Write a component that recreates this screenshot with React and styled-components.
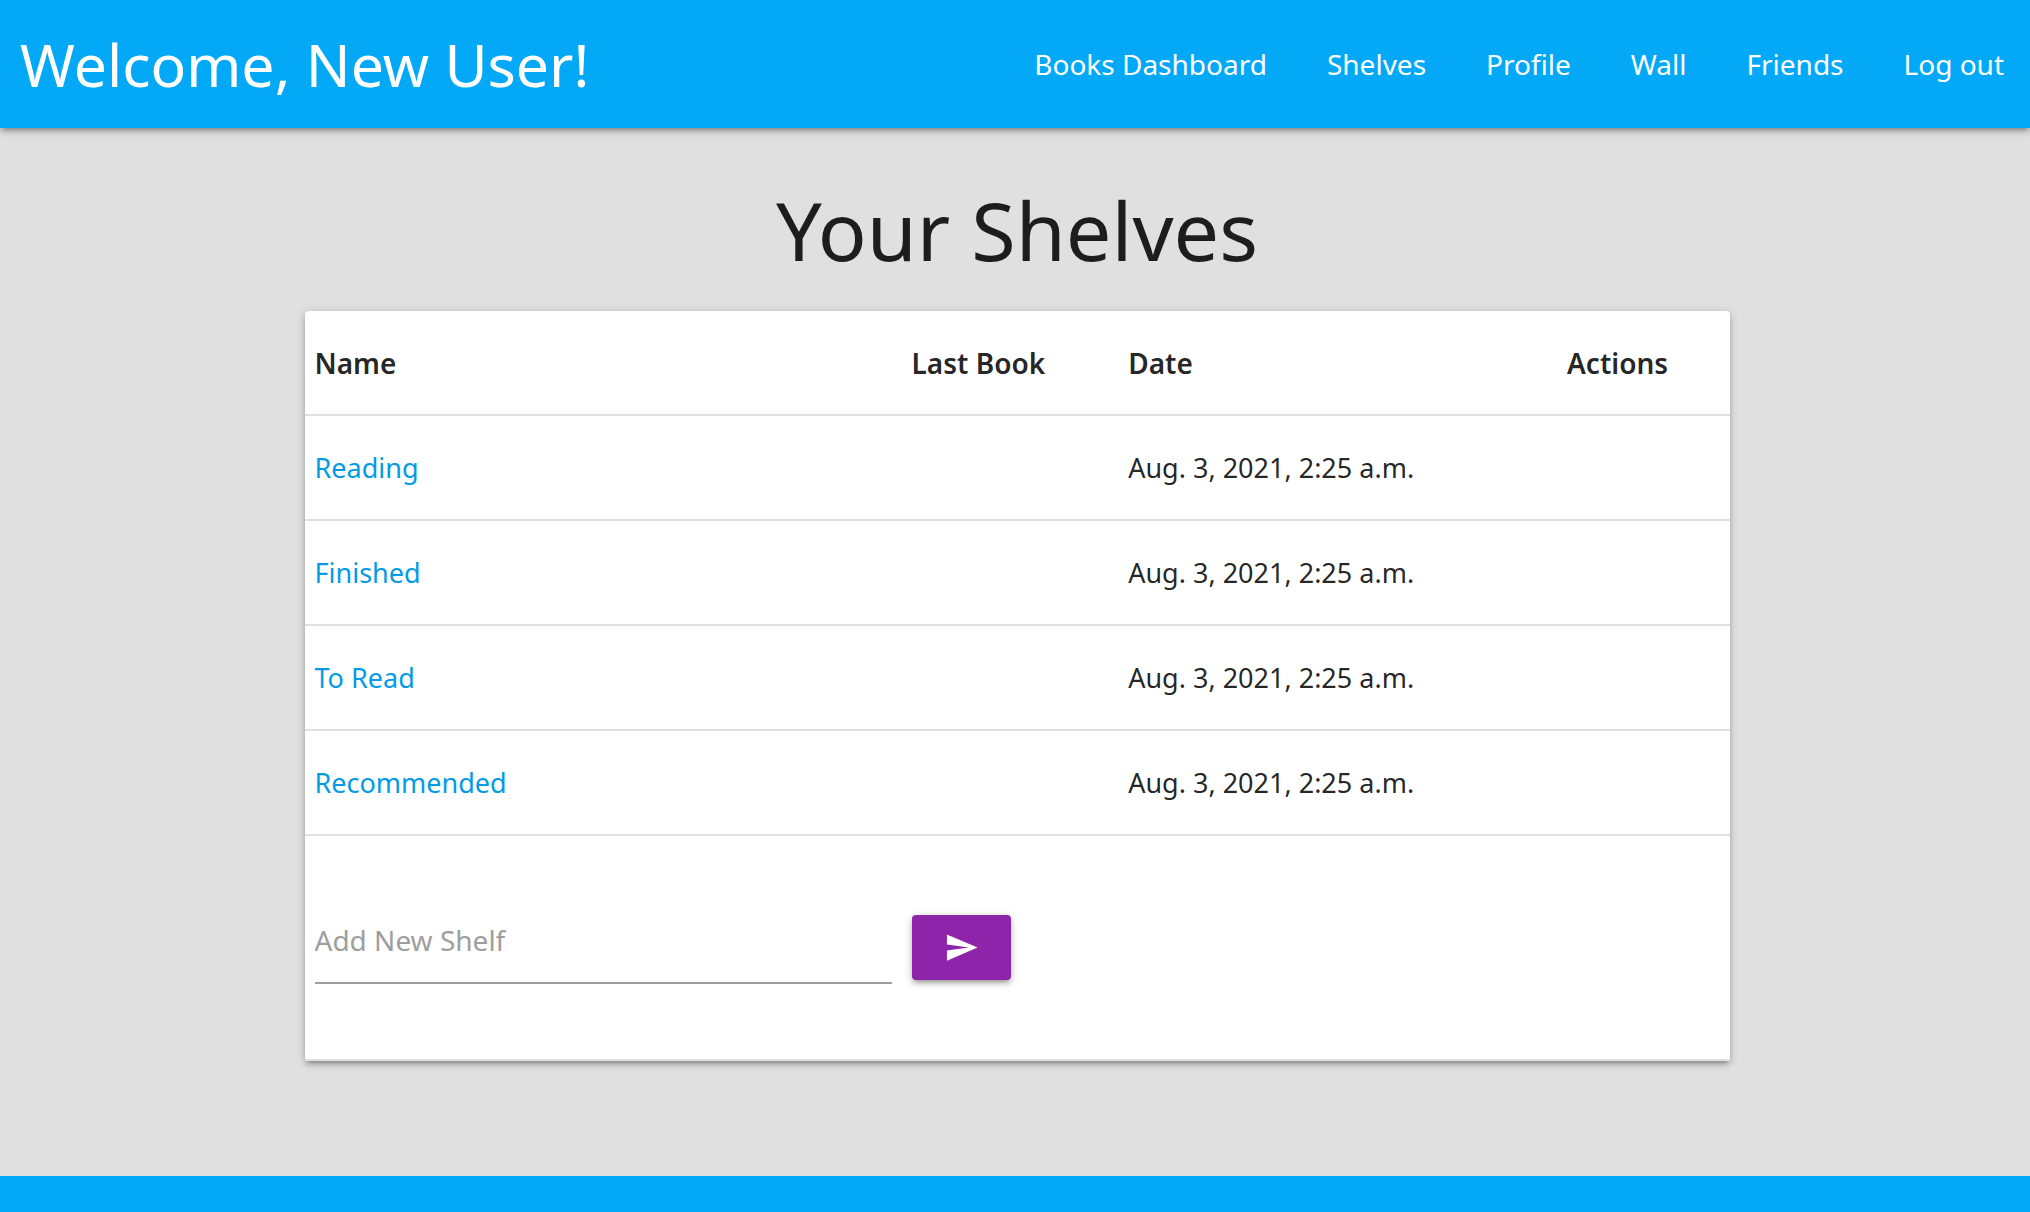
import React from "react";
import styled, { createGlobalStyle } from "styled-components";

const GlobalStyle = createGlobalStyle`
  *, *::before, *::after { box-sizing: border-box; }
  body {
    margin: 0;
    background: #e0e0e0;
    color: rgba(0, 0, 0, 0.87);
    font-family: "Noto Sans", "Open Sans", sans-serif;
    font-size: 28px;
    line-height: 42px;
  }
`;

const Page = styled.div`
  display: flex;
  flex-direction: column;
  min-height: 100vh;
`;

const Header = styled.header`
  display: flex;
  align-items: center;
  justify-content: space-between;
  height: 128px;
  padding: 0 26px 0 20px;
  background: #03a9f7;
  color: #fff;
  box-shadow: 0 4px 4px rgba(0, 0, 0, 0.14), 0 6px 2px -4px rgba(0, 0, 0, 0.12),
    0 2px 10px rgba(0, 0, 0, 0.2);
`;

const Greeting = styled.span`
  font-size: 59px;
  line-height: 128px;
  white-space: nowrap;
`;

const Nav = styled.nav`
  display: flex;
  gap: 60px;
`;

const NavLink = styled.a`
  color: #fff;
  text-decoration: none;
  white-space: nowrap;
`;

const Main = styled.main`
  flex: 1;
  padding: 56px calc(15% - 4px) 60px 15%;
`;

const Title = styled.h1`
  margin: 0 0 35px;
  font-size: 81px;
  font-weight: 400;
  line-height: 92px;
  text-align: center;
`;

const Card = styled.form`
  background: #fff;
  border-radius: 4px;
  box-shadow: 0 4px 4px rgba(0, 0, 0, 0.14), 0 6px 2px -4px rgba(0, 0, 0, 0.12),
    0 2px 10px rgba(0, 0, 0, 0.2);
`;

const Table = styled.table`
  width: 100%;
  table-layout: fixed;
  border-collapse: separate;
  border-spacing: 0;
`;

const Column = styled.col`
  width: ${(p) => p.$width};
`;

const Row = styled.tr`
  height: ${(p) => (p.$tall ? "225px" : "105px")};
`;

const HeadCell = styled.th`
  padding: 0 10px;
  border-bottom: 2px solid #e0e0e0;
  font-weight: 600;
  text-align: left;
`;

const Cell = styled.td`
  padding: 0 10px;
  border-bottom: 2px solid #e0e0e0;
  font-size: 27px;
  white-space: nowrap;
`;

const ShelfLink = styled.a`
  color: #039be5;
  text-decoration: none;
`;

const ShelfInput = styled.input`
  display: block;
  width: 100%;
  height: 86px;
  margin: 0 0 14px;
  padding: 0;
  border: 0;
  border-bottom: 2px solid #9e9e9e;
  border-radius: 0;
  outline: 0;
  background: transparent;
  color: inherit;
  font: inherit;
  font-size: 28px;

  &::placeholder {
    color: #9e9e9e;
    opacity: 1;
  }
`;

const SendButton = styled.button`
  display: flex;
  align-items: center;
  justify-content: center;
  width: 99px;
  height: 65px;
  padding: 0;
  border: 0;
  border-radius: 4px;
  background: #8e24aa;
  color: #fff;
  cursor: pointer;
  box-shadow: 0 4px 4px rgba(0, 0, 0, 0.14), 0 6px 2px -4px rgba(0, 0, 0, 0.12),
    0 2px 10px rgba(0, 0, 0, 0.2);
`;

const Footer = styled.footer`
  height: 36px;
  background: #03a9f7;
`;

const links = ["Books Dashboard", "Shelves", "Profile", "Wall", "Friends", "Log out"];
const shelves = ["Reading", "Finished", "To Read", "Recommended"];
const columnWidths = ["41.9%", "15.2%", "30.8%", "12.1%"];

export default function App() {
  return (
    <Page>
      <GlobalStyle />
      <Header>
        <Greeting>Welcome, New User!</Greeting>
        <Nav>
          {links.map((label) => (
            <NavLink key={label} href="#">{label}</NavLink>
          ))}
        </Nav>
      </Header>
      <Main>
        <Title>Your Shelves</Title>
        <Card onSubmit={(e) => e.preventDefault()}>
          <Table>
            <colgroup>
              {columnWidths.map((w) => (
                <Column key={w} $width={w} />
              ))}
            </colgroup>
            <thead>
              <Row>
                <HeadCell>Name</HeadCell>
                <HeadCell>Last Book</HeadCell>
                <HeadCell>Date</HeadCell>
                <HeadCell>Actions</HeadCell>
              </Row>
            </thead>
            <tbody>
              {shelves.map((name) => (
                <Row key={name}>
                  <Cell><ShelfLink href="#">{name}</ShelfLink></Cell>
                  <Cell />
                  <Cell>Aug. 3, 2021, 2:25 a.m.</Cell>
                  <Cell />
                </Row>
              ))}
              <Row $tall>
                <Cell>
                  <ShelfInput type="text" aria-label="Add New Shelf" placeholder="Add New Shelf" />
                </Cell>
                <Cell>
                  <SendButton type="submit" aria-label="Add shelf">
                    <svg width="35" height="35" viewBox="0 0 24 24" fill="currentColor" aria-hidden="true">
                      <path d="M2.01 21L23 12 2.01 3 2 10l15 2-15 2z" />
                    </svg>
                  </SendButton>
                </Cell>
                <Cell />
                <Cell />
              </Row>
            </tbody>
          </Table>
        </Card>
      </Main>
      <Footer />
    </Page>
  );
}
